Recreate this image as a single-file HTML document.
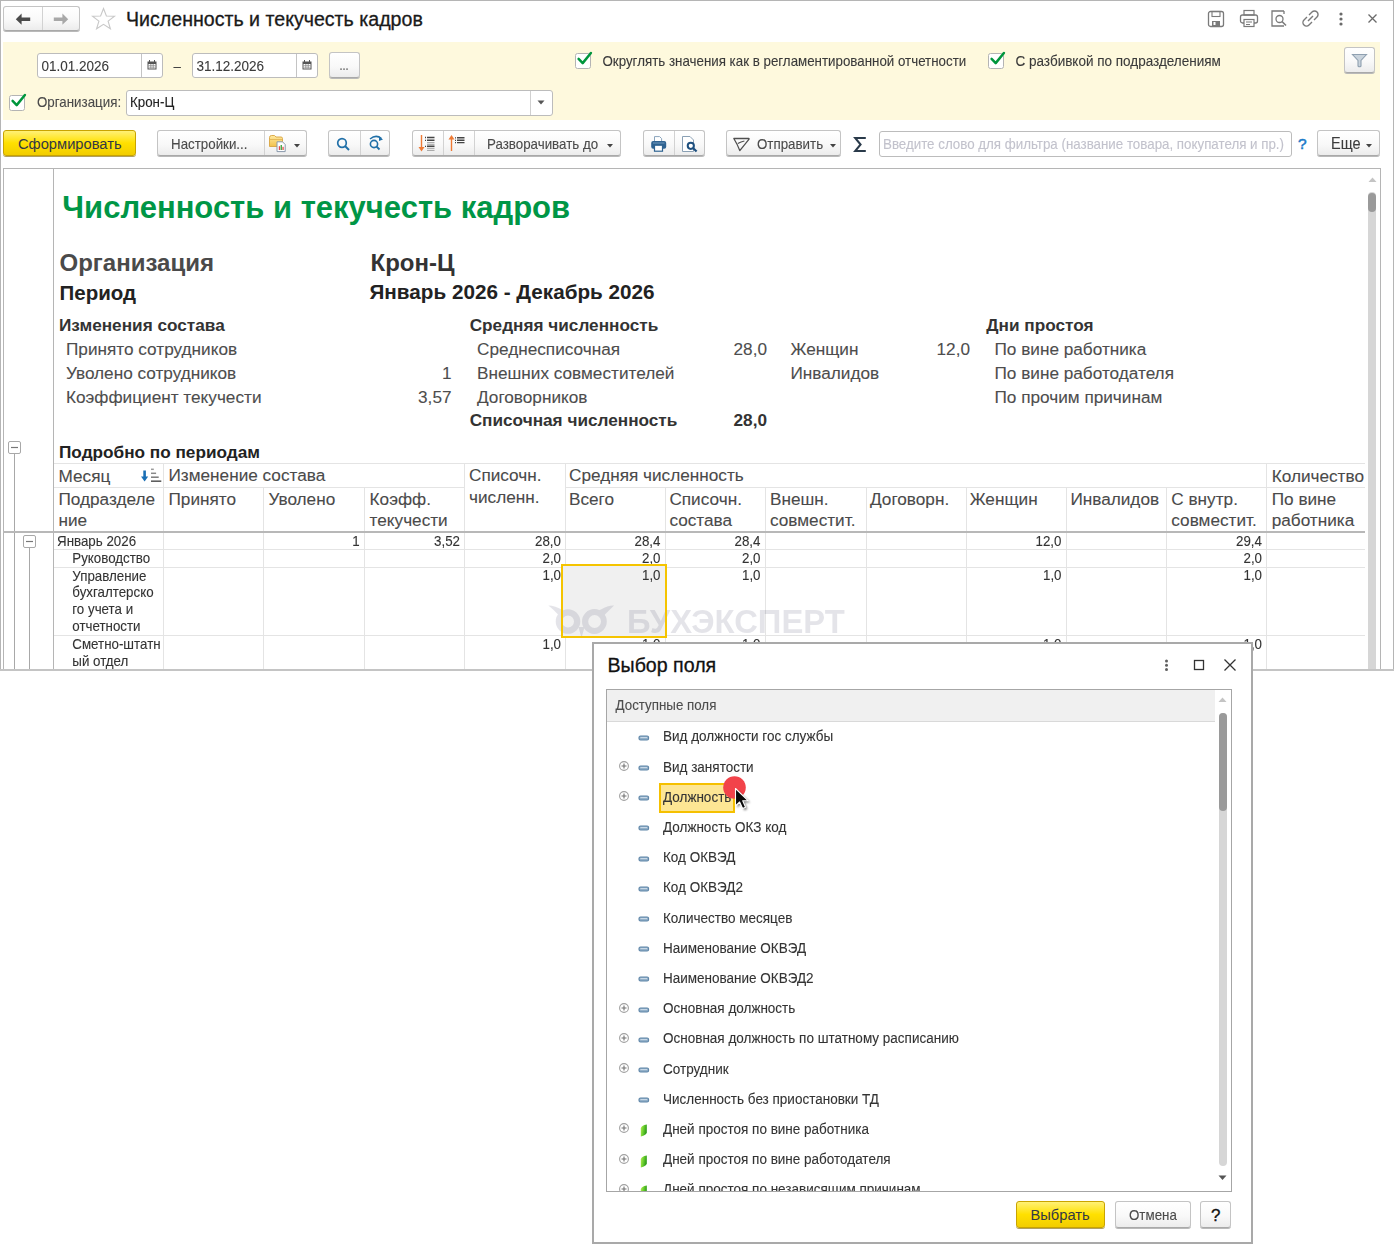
<!DOCTYPE html><html><head><meta charset="utf-8"><style>
html,body{margin:0;padding:0;background:#fff;width:1394px;height:1244px;overflow:hidden;position:relative;font-family:"Liberation Sans",sans-serif}
.t{position:absolute;white-space:nowrap;line-height:1;font-family:"Liberation Sans",sans-serif}
.r{position:absolute}
</style></head><body>
<div class="r" style="left:0px;top:0px;width:1394px;height:671px;box-sizing:border-box;border:1px solid #b5b5b5;background:#fff"></div>
<div class="r" style="left:3px;top:6px;width:77px;height:25px;box-sizing:border-box;border:1px solid #c4c4c4;border-bottom-color:#a9a9a9;border-radius:3px;background:linear-gradient(#ffffff,#f9f9f9 55%,#ececec);box-shadow:0 1px 0 #b9b9b9;"></div>
<div class="r" style="left:42px;top:7px;width:1px;height:23px;background:#d2d2d2"></div>
<svg class="r" style="left:15px;top:13px;" width="17" height="13" viewBox="0 0 17 13"><path d="M0.8 6.2 L6.6 0.6 V4.5 H15.2 V7.9 H6.6 V11.8 Z" fill="#4a4a4a"/></svg>
<svg class="r" style="left:52px;top:13px;" width="17" height="13" viewBox="0 0 17 13"><path d="M16.2 6.2 L10.4 0.6 V4.5 H1.8 V7.9 H10.4 V11.8 Z" fill="#a8a8a8"/></svg>
<svg class="r" style="left:91px;top:7px;" width="26" height="23" viewBox="0 0 26 23"><path d="M12.5 1.5 L15.4 9 L23.5 9.2 L17.1 14.1 L19.4 21.8 L12.5 17.3 L5.6 21.8 L7.9 14.1 L1.5 9.2 L9.6 9 Z" fill="none" stroke="#c8c8c8" stroke-width="1.1"/></svg>
<div class="t" style="left:126.00px;top:10.01px;font-size:19.6px;font-weight:400;color:#1a1a1a;-webkit-text-stroke:0.3px #1a1a1a">Численность и текучесть кадров</div>
<svg class="r" style="left:1207px;top:10px;" width="18" height="18" viewBox="0 0 18 18"><rect x="1.5" y="1.5" width="15" height="15" rx="2" fill="none" stroke="#7a7a7a" stroke-width="1.3"/><rect x="5" y="1.5" width="8" height="5" fill="none" stroke="#7a7a7a" stroke-width="1.1"/><rect x="5" y="11" width="8" height="5.5" fill="#7a7a7a"/><rect x="6.5" y="12" width="2" height="3" fill="#fff"/></svg>
<svg class="r" style="left:1239px;top:9px;" width="20" height="19" viewBox="0 0 20 19"><rect x="5" y="1.5" width="10" height="4.5" fill="none" stroke="#7a7a7a" stroke-width="1.2"/><rect x="1.5" y="6" width="17" height="8" rx="2" fill="none" stroke="#7a7a7a" stroke-width="1.3"/><rect x="5" y="10.5" width="10" height="7" fill="#fff" stroke="#7a7a7a" stroke-width="1.2"/><line x1="7" y1="13" x2="13" y2="13" stroke="#7a7a7a"/><line x1="7" y1="15.5" x2="11" y2="15.5" stroke="#7a7a7a"/></svg>
<svg class="r" style="left:1270px;top:9px;" width="19" height="19" viewBox="0 0 19 19"><path d="M14 2 H2 V17 H14" fill="none" stroke="#7a7a7a" stroke-width="1.3"/><path d="M14 2 V5" stroke="#7a7a7a" stroke-width="1.3"/><circle cx="9.5" cy="10" r="3.5" fill="none" stroke="#7a7a7a" stroke-width="1.3"/><line x1="12" y1="12.5" x2="16" y2="16.5" stroke="#7a7a7a" stroke-width="1.6"/></svg>
<svg class="r" style="left:1301px;top:9px;" width="19" height="19" viewBox="0 0 19 19"><path d="M8 6 L11 3 A3 3 0 0 1 16 8 L13 11" fill="none" stroke="#7a7a7a" stroke-width="1.4"/><path d="M11 13 L8 16 A3 3 0 0 1 3 11 L6 8" fill="none" stroke="#7a7a7a" stroke-width="1.4"/><line x1="7" y1="12" x2="12" y2="7" stroke="#7a7a7a" stroke-width="1.4"/></svg>
<svg class="r" style="left:1337px;top:11px;" width="8" height="16" viewBox="0 0 8 16"><circle cx="4" cy="3" r="1.6" fill="#6a6a6a"/><circle cx="4" cy="8" r="1.6" fill="#6a6a6a"/><circle cx="4" cy="13" r="1.6" fill="#6a6a6a"/></svg>
<svg class="r" style="left:1367px;top:13px;" width="11" height="11" viewBox="0 0 11 11"><path d="M1.5 1.5 L9.5 9.5 M9.5 1.5 L1.5 9.5" stroke="#6a6a6a" stroke-width="1.3"/></svg>
<div class="r" style="left:3px;top:42px;width:1377px;height:78px;background:#fef9dd"></div>
<div class="r" style="left:37px;top:53px;width:126px;height:25px;box-sizing:border-box;border:1px solid #bcbcbc;border-radius:3px;background:#fff"></div>
<div class="r" style="left:141px;top:54px;width:1px;height:23px;background:#c4c4c4"></div>
<div class="t" style="left:41.50px;top:60.07px;font-size:13.5px;font-weight:400;color:#3a3a3a;-webkit-text-stroke:0.1px #3a3a3a;transform:scaleY(1.08);transform-origin:0 84.65%;">01.01.2026</div>
<svg class="r" style="left:147px;top:60px;" width="10" height="10" viewBox="0 0 10 10"><rect x="0.5" y="1.5" width="9" height="8" fill="#555"/><rect x="1.5" y="4" width="7" height="4.5" fill="#fff"/><path d="M2.5 0 V2 M7.5 0 V2" stroke="#555"/><path d="M1.5 5.5 H8.5 M1.5 7.2 H8.5 M3.5 4 V8.5 M5 4 V8.5 M6.5 4 V8.5" stroke="#888" stroke-width="0.6"/></svg>
<div class="t" style="left:173.50px;top:59.92px;font-size:13.33px;font-weight:400;color:#444;-webkit-text-stroke:0.1px #444;transform:scaleY(1.08);transform-origin:0 84.65%;">–</div>
<div class="r" style="left:192px;top:53px;width:126px;height:25px;box-sizing:border-box;border:1px solid #bcbcbc;border-radius:3px;background:#fff"></div>
<div class="r" style="left:296px;top:54px;width:1px;height:23px;background:#c4c4c4"></div>
<div class="t" style="left:196.50px;top:60.07px;font-size:13.5px;font-weight:400;color:#3a3a3a;-webkit-text-stroke:0.1px #3a3a3a;transform:scaleY(1.08);transform-origin:0 84.65%;">31.12.2026</div>
<svg class="r" style="left:302px;top:60px;" width="10" height="10" viewBox="0 0 10 10"><rect x="0.5" y="1.5" width="9" height="8" fill="#555"/><rect x="1.5" y="4" width="7" height="4.5" fill="#fff"/><path d="M2.5 0 V2 M7.5 0 V2" stroke="#555"/><path d="M1.5 5.5 H8.5 M1.5 7.2 H8.5 M3.5 4 V8.5 M5 4 V8.5 M6.5 4 V8.5" stroke="#888" stroke-width="0.6"/></svg>
<div class="r" style="left:329px;top:52px;width:31px;height:26px;box-sizing:border-box;border:1px solid #c4c4c4;border-bottom-color:#a9a9a9;border-radius:3px;background:linear-gradient(#ffffff,#f9f9f9 55%,#ececec);box-shadow:0 1px 0 #b9b9b9;"></div>
<div class="t" style="left:339.50px;top:60.99px;font-size:11px;font-weight:400;color:#555;-webkit-text-stroke:0.1px #555;transform:scaleY(1.08);transform-origin:0 84.65%;">...</div>
<div class="r" style="left:575px;top:53px;width:16px;height:16px;box-sizing:border-box;border:1.3px solid #b4b4b4;border-radius:2.5px;background:#fff"></div>
<svg class="r" style="left:575px;top:50px;" width="20" height="17" viewBox="0 0 20 17"><path d="M3.6 8.9 L7.7 13.1 L15.9 3" fill="none" stroke="#00963c" stroke-width="2.5" stroke-linecap="round" stroke-linejoin="round"/></svg>
<div class="t" style="left:602.50px;top:55.02px;font-size:13.33px;font-weight:400;color:#3a3a3a;-webkit-text-stroke:0.1px #3a3a3a;transform:scaleY(1.08);transform-origin:0 84.65%;">Округлять значения как в регламентированной отчетности</div>
<div class="r" style="left:988px;top:53px;width:16px;height:16px;box-sizing:border-box;border:1.3px solid #b4b4b4;border-radius:2.5px;background:#fff"></div>
<svg class="r" style="left:988px;top:50px;" width="20" height="17" viewBox="0 0 20 17"><path d="M3.6 8.9 L7.7 13.1 L15.9 3" fill="none" stroke="#00963c" stroke-width="2.5" stroke-linecap="round" stroke-linejoin="round"/></svg>
<div class="t" style="left:1015.50px;top:54.87px;font-size:13.5px;font-weight:400;color:#3a3a3a;-webkit-text-stroke:0.1px #3a3a3a;transform:scaleY(1.08);transform-origin:0 84.65%;">С разбивкой по подразделениям</div>
<div class="r" style="left:1344px;top:47px;width:31px;height:26px;box-sizing:border-box;border:1px solid #c4c4c4;border-bottom-color:#a9a9a9;border-radius:3px;background:linear-gradient(#ffffff,#f9f9f9 55%,#ececec);box-shadow:0 1px 0 #b9b9b9;"></div>
<svg class="r" style="left:1351px;top:53px;" width="17" height="15" viewBox="0 0 17 15"><path d="M1.5 1.5 H15.5 L10 7.5 V13 Q8.5 14.5 7 13 V7.5 Z" fill="#c9d3dc" stroke="#8fa0b0" stroke-width="1.1"/></svg>
<div class="r" style="left:9px;top:95px;width:16px;height:16px;box-sizing:border-box;border:1.3px solid #b4b4b4;border-radius:2.5px;background:#fff"></div>
<svg class="r" style="left:9px;top:92px;" width="20" height="17" viewBox="0 0 20 17"><path d="M3.6 8.9 L7.7 13.1 L15.9 3" fill="none" stroke="#00963c" stroke-width="2.5" stroke-linecap="round" stroke-linejoin="round"/></svg>
<div class="t" style="left:37.00px;top:96.22px;font-size:13.33px;font-weight:400;color:#4a4a4a;-webkit-text-stroke:0.1px #4a4a4a;transform:scaleY(1.08);transform-origin:0 84.65%;">Организация:</div>
<div class="r" style="left:126px;top:90px;width:427px;height:26px;box-sizing:border-box;border:1px solid #bcbcbc;border-radius:3px;background:#fff"></div>
<div class="r" style="left:530px;top:91px;width:1px;height:24px;background:#d0d0d0"></div>
<svg class="r" style="left:537px;top:100px;" width="8" height="5" viewBox="0 0 8 5"><path d="M0.5 0.5 H7.5 L4 4.5 Z" fill="#555"/></svg>
<div class="t" style="left:130.00px;top:96.22px;font-size:13.33px;font-weight:400;color:#222;-webkit-text-stroke:0.1px #222;transform:scaleY(1.08);transform-origin:0 84.65%;">Крон-Ц</div>
<div class="r" style="left:3px;top:130px;width:133px;height:26px;box-sizing:border-box;border:1px solid #c9a400;border-radius:3px;background:linear-gradient(#fff176,#ffe000 50%,#f2cd00);box-shadow:0 1px 0 #b0a060"></div>
<div class="t" style="left:18.00px;top:137.06px;font-size:14.7px;font-weight:400;color:#333844;-webkit-text-stroke:0.35px #333844transform:scaleY(1.08);transform-origin:0 84.65%;">Сформировать</div>
<div class="r" style="left:157px;top:130px;width:150px;height:26px;box-sizing:border-box;border:1px solid #c4c4c4;border-bottom-color:#a9a9a9;border-radius:3px;background:linear-gradient(#ffffff,#f9f9f9 55%,#ececec);box-shadow:0 1px 0 #b9b9b9;"></div>
<div class="r" style="left:264px;top:131px;width:1px;height:24px;background:#d2d2d2"></div>
<div class="t" style="left:171.00px;top:137.72px;font-size:13.33px;font-weight:400;color:#4a4a4a;-webkit-text-stroke:0.1px #4a4a4a;transform:scaleY(1.08);transform-origin:0 84.65%;">Настройки...</div>
<svg class="r" style="left:268px;top:134px;" width="20" height="19" viewBox="0 0 20 19"><defs><linearGradient id="fg" x1="0" y1="0" x2="0" y2="1"><stop offset="0" stop-color="#ffe9a0"/><stop offset="1" stop-color="#f2c24e"/></linearGradient></defs><path d="M1.5 3.5 Q1.5 1.5 3.5 1.5 H6.5 L8 3 H13 Q14.5 3 14.5 4.5 V12.5 H1.5 Z" fill="url(#fg)" stroke="#d8a440" stroke-width="0.9"/><path d="M1.5 5.5 H14.5" stroke="#e0b050" stroke-width="0.8"/><path d="M9 7.8 H14.5 L17.2 10.5 V17.6 H9 Z" fill="#fff" stroke="#8898aa" stroke-width="1"/><rect x="10.8" y="12.2" width="1.3" height="3.8" fill="#e24a4a"/><rect x="12.6" y="11" width="1.3" height="5" fill="#3aa03a"/><rect x="14.4" y="12.8" width="1.3" height="3.2" fill="#e24a4a"/></svg>
<svg class="r" style="left:294px;top:144px;" width="7" height="4" viewBox="0 0 7 4"><path d="M0 0 H6 L3 3.5 Z" fill="#444"/></svg>
<div class="r" style="left:328px;top:130px;width:62px;height:26px;box-sizing:border-box;border:1px solid #c4c4c4;border-bottom-color:#a9a9a9;border-radius:3px;background:linear-gradient(#ffffff,#f9f9f9 55%,#ececec);box-shadow:0 1px 0 #b9b9b9;"></div>
<div class="r" style="left:360px;top:131px;width:1px;height:24px;background:#d2d2d2"></div>
<svg class="r" style="left:336px;top:137px;" width="15" height="14" viewBox="0 0 15 14"><circle cx="6" cy="6" r="4.3" fill="none" stroke="#2170a8" stroke-width="1.7"/><line x1="9" y1="9" x2="13" y2="13" stroke="#2170a8" stroke-width="2"/></svg>
<svg class="r" style="left:368px;top:135px;" width="16" height="16" viewBox="0 0 16 16"><path d="M2 4 Q8 -1 13.5 3.5" fill="none" stroke="#2170a8" stroke-width="1.5"/><path d="M11 1.5 L15 4.5 L11 6 Z" fill="#2170a8"/><circle cx="6" cy="9" r="3.6" fill="none" stroke="#2170a8" stroke-width="1.6"/><line x1="8.5" y1="11.5" x2="11.5" y2="14.5" stroke="#2170a8" stroke-width="1.8"/></svg>
<div class="r" style="left:412px;top:130px;width:209px;height:26px;box-sizing:border-box;border:1px solid #c4c4c4;border-bottom-color:#a9a9a9;border-radius:3px;background:linear-gradient(#ffffff,#f9f9f9 55%,#ececec);box-shadow:0 1px 0 #b9b9b9;"></div>
<div class="r" style="left:443px;top:131px;width:1px;height:24px;background:#d2d2d2"></div>
<div class="r" style="left:474px;top:131px;width:1px;height:24px;background:#d2d2d2"></div>
<svg class="r" style="left:417px;top:134px;" width="20" height="19" viewBox="0 0 20 19"><path d="M4.5 1 V15" stroke="#ee7a35" stroke-width="1.4"/><path d="M1.5 13 L4.5 17.5 L7.5 13 Z" fill="#ee7a35"/><path d="M8 3.5 H9 M8 6.3 H9 M8 12.3 H9" stroke="#444" stroke-width="1.3"/><path d="M10 3.5 H17.5 M10 6.3 H17.5 M10 12.3 H17.5" stroke="#444" stroke-width="1.4"/><path d="M10 8.6 H17.5 M10 10.3 H17.5 M10 14.3 H17.5 M10 16.4 H17.5" stroke="#999" stroke-width="0.9"/></svg>
<svg class="r" style="left:447px;top:134px;" width="20" height="19" viewBox="0 0 20 19"><path d="M4.5 3 V17" stroke="#ee7a35" stroke-width="1.4"/><path d="M1.5 5.5 L4.5 1 L7.5 5.5 Z" fill="#ee7a35"/><path d="M8 3.8 H9 M8 6.3 H9 M8 8.6 H9" stroke="#444" stroke-width="1.3"/><path d="M10 3.8 H17.5 M10 6.3 H17.5 M10 8.6 H17.5" stroke="#444" stroke-width="1.4"/></svg>
<div class="t" style="left:487.00px;top:137.72px;font-size:13.33px;font-weight:400;color:#4a4a4a;-webkit-text-stroke:0.1px #4a4a4a;transform:scaleY(1.08);transform-origin:0 84.65%;">Разворачивать до</div>
<svg class="r" style="left:607px;top:144px;" width="7" height="4" viewBox="0 0 7 4"><path d="M0 0 H6 L3 3.5 Z" fill="#444"/></svg>
<div class="r" style="left:643px;top:130px;width:62px;height:26px;box-sizing:border-box;border:1px solid #c4c4c4;border-bottom-color:#a9a9a9;border-radius:3px;background:linear-gradient(#ffffff,#f9f9f9 55%,#ececec);box-shadow:0 1px 0 #b9b9b9;"></div>
<div class="r" style="left:674px;top:131px;width:1px;height:24px;background:#d2d2d2"></div>
<svg class="r" style="left:650px;top:135px;" width="18" height="18" viewBox="0 0 18 18"><path d="M4.5 6 V1.6 H9.6 L11.6 3.6 V6" fill="#fff" stroke="#8aa4bc" stroke-width="1"/><rect x="1.2" y="6" width="15" height="7.8" rx="2" fill="#2f6391"/><line x1="3" y1="8" x2="14.5" y2="8" stroke="#7aa2c4" stroke-width="0.9"/><rect x="4.5" y="10.2" width="8" height="6" fill="#fff" stroke="#2f6391" stroke-width="1.2"/></svg>
<svg class="r" style="left:681px;top:135px;" width="18" height="18" viewBox="0 0 18 18"><path d="M1.5 1.5 H9 L12.5 5 V16.5 H1.5 Z" fill="#fff" stroke="#8aa0b4" stroke-width="1"/><circle cx="9.8" cy="10.8" r="3.1" fill="none" stroke="#1d4f7e" stroke-width="2"/><line x1="12" y1="13" x2="15.6" y2="16.5" stroke="#1d4f7e" stroke-width="2.2"/></svg>
<div class="r" style="left:726px;top:130px;width:115px;height:26px;box-sizing:border-box;border:1px solid #c4c4c4;border-bottom-color:#a9a9a9;border-radius:3px;background:linear-gradient(#ffffff,#f9f9f9 55%,#ececec);box-shadow:0 1px 0 #b9b9b9;"></div>
<svg class="r" style="left:732px;top:136px;" width="19" height="16" viewBox="0 0 19 16"><path d="M1.8 2.5 H16.6 Q17.4 2.6 16.9 3.4 L7.8 14.6 Q5.6 8.6 1.8 2.5 Z" fill="none" stroke="#505050" stroke-width="1.3" stroke-linejoin="round"/><path d="M5.8 7.6 Q9 5.6 12.4 5" fill="none" stroke="#505050" stroke-width="1.2"/></svg>
<div class="t" style="left:757.00px;top:137.72px;font-size:13.33px;font-weight:400;color:#4a4a4a;-webkit-text-stroke:0.1px #4a4a4a;transform:scaleY(1.08);transform-origin:0 84.65%;">Отправить</div>
<svg class="r" style="left:830px;top:144px;" width="7" height="4" viewBox="0 0 7 4"><path d="M0 0 H6 L3 3.5 Z" fill="#444"/></svg>
<svg class="r" style="left:853px;top:136px;" width="14" height="17" viewBox="0 0 14 17"><path d="M12.8 2 H2.2 L7.6 8.5 L2.2 15 H12.8" fill="none" stroke="#2a3a4a" stroke-width="2" stroke-linejoin="miter"/></svg>
<div class="r" style="left:879px;top:131px;width:413px;height:26px;box-sizing:border-box;border:1px solid #bcbcbc;border-radius:3px;background:#fff"></div>
<div class="t" style="left:883.00px;top:137.72px;font-size:13.33px;font-weight:400;color:#c2c2cc;-webkit-text-stroke:0.1px #c2c2cc;transform:scaleY(1.08);transform-origin:0 84.65%;">Введите слово для фильтра (название товара, покупателя и пр.)</div>
<div class="t" style="left:1298.00px;top:136.38px;font-size:15.5px;font-weight:400;color:#1a7ac8;-webkit-text-stroke:0.5px #1a7ac8">?</div>
<div class="r" style="left:1317px;top:130px;width:63px;height:26px;box-sizing:border-box;border:1px solid #c4c4c4;border-bottom-color:#a9a9a9;border-radius:3px;background:linear-gradient(#ffffff,#f9f9f9 55%,#ececec);box-shadow:0 1px 0 #b9b9b9;"></div>
<div class="t" style="left:1331.00px;top:136.73px;font-size:14.5px;font-weight:400;color:#3c3c3c;-webkit-text-stroke:0.1px #3c3c3c;transform:scaleY(1.08);transform-origin:0 84.65%;">Еще</div>
<svg class="r" style="left:1366px;top:144px;" width="7" height="4" viewBox="0 0 7 4"><path d="M0 0 H6 L3 3.5 Z" fill="#444"/></svg>
<div class="r" style="left:3px;top:168px;width:1378px;height:503px;box-sizing:border-box;border:1px solid #b5b5b5;border-bottom:none;background:#fff"></div>
<div class="r" style="left:53px;top:169px;width:1px;height:502px;background:#b5b5b5"></div>
<svg class="r" style="left:1368px;top:177px;" width="9" height="6" viewBox="0 0 9 6"><path d="M0.5 5 H8.5 L4.5 0.5 Z" fill="#c4c4c4"/></svg>
<div class="r" style="left:1368px;top:192px;width:8px;height:479px;background:#d6d6d6;border-radius:4px 4px 0 0"></div>
<div class="r" style="left:1368px;top:193px;width:8px;height:19px;background:#9a9a9a;border-radius:4px"></div>
<div class="t" style="left:62.30px;top:192.26px;font-size:31px;font-weight:700;color:#009646;">Численность и текучесть кадров</div>
<div class="t" style="left:59.50px;top:251.48px;font-size:24px;font-weight:700;color:#4a4a4a;">Организация</div>
<div class="t" style="left:370.50px;top:251.18px;font-size:24px;font-weight:700;color:#333;">Крон-Ц</div>
<div class="t" style="left:59.50px;top:282.65px;font-size:20.5px;font-weight:700;color:#222;">Период</div>
<div class="t" style="left:369.50px;top:282.28px;font-size:20.7px;font-weight:700;color:#222;">Январь 2026 - Декабрь 2026</div>
<div class="t" style="left:59.00px;top:317.44px;font-size:17.2px;font-weight:700;color:#333;">Изменения состава</div>
<div class="t" style="left:66.00px;top:341.44px;font-size:17.2px;font-weight:400;color:#4d4d4d;-webkit-text-stroke:0.1px #4d4d4d;">Принято сотрудников</div>
<div class="t" style="left:66.00px;top:365.44px;font-size:17.2px;font-weight:400;color:#4d4d4d;-webkit-text-stroke:0.1px #4d4d4d;">Уволено сотрудников</div>
<div class="t" style="left:66.00px;top:389.14px;font-size:17.2px;font-weight:400;color:#4d4d4d;-webkit-text-stroke:0.1px #4d4d4d;">Коэффициент текучести</div>
<div class="t" style="right:942.50px;top:365.44px;font-size:17.2px;font-weight:400;color:#4d4d4d;-webkit-text-stroke:0.1px #4d4d4d;">1</div>
<div class="t" style="right:942.50px;top:389.14px;font-size:17.2px;font-weight:400;color:#4d4d4d;-webkit-text-stroke:0.1px #4d4d4d;">3,57</div>
<div class="t" style="left:469.70px;top:317.44px;font-size:17.2px;font-weight:700;color:#333;">Средняя численность</div>
<div class="t" style="left:477.00px;top:341.44px;font-size:17.2px;font-weight:400;color:#4d4d4d;-webkit-text-stroke:0.1px #4d4d4d;">Среднесписочная</div>
<div class="t" style="left:477.00px;top:365.44px;font-size:17.2px;font-weight:400;color:#4d4d4d;-webkit-text-stroke:0.1px #4d4d4d;">Внешних совместителей</div>
<div class="t" style="left:477.00px;top:389.14px;font-size:17.2px;font-weight:400;color:#4d4d4d;-webkit-text-stroke:0.1px #4d4d4d;">Договорников</div>
<div class="t" style="left:469.70px;top:411.94px;font-size:17.2px;font-weight:700;color:#333;">Списочная численность</div>
<div class="t" style="right:627.00px;top:341.44px;font-size:17.2px;font-weight:400;color:#4d4d4d;-webkit-text-stroke:0.1px #4d4d4d;">28,0</div>
<div class="t" style="right:627.00px;top:411.94px;font-size:17.2px;font-weight:700;color:#333;">28,0</div>
<div class="t" style="left:790.50px;top:341.44px;font-size:17.2px;font-weight:400;color:#4d4d4d;-webkit-text-stroke:0.1px #4d4d4d;">Женщин</div>
<div class="t" style="left:790.50px;top:365.44px;font-size:17.2px;font-weight:400;color:#4d4d4d;-webkit-text-stroke:0.1px #4d4d4d;">Инвалидов</div>
<div class="t" style="right:424.00px;top:341.44px;font-size:17.2px;font-weight:400;color:#4d4d4d;-webkit-text-stroke:0.1px #4d4d4d;">12,0</div>
<div class="t" style="left:986.30px;top:317.44px;font-size:17.2px;font-weight:700;color:#333;">Дни простоя</div>
<div class="t" style="left:994.50px;top:341.44px;font-size:17.2px;font-weight:400;color:#4d4d4d;-webkit-text-stroke:0.1px #4d4d4d;">По вине работника</div>
<div class="t" style="left:994.50px;top:365.44px;font-size:17.2px;font-weight:400;color:#4d4d4d;-webkit-text-stroke:0.1px #4d4d4d;">По вине работодателя</div>
<div class="t" style="left:994.50px;top:389.14px;font-size:17.2px;font-weight:400;color:#4d4d4d;-webkit-text-stroke:0.1px #4d4d4d;">По прочим причинам</div>
<svg class="r" style="left:8px;top:441px;" width="14" height="14" viewBox="0 0 14 14"><rect x="0.5" y="0.5" width="12" height="12" rx="1.5" fill="#fff" stroke="#a8a8a8"/><line x1="3" y1="6.5" x2="10" y2="6.5" stroke="#777" stroke-width="1.2"/></svg>
<div class="r" style="left:14px;top:454px;width:1px;height:217px;background:#a8a8a8"></div>
<svg class="r" style="left:23px;top:535px;" width="14" height="14" viewBox="0 0 14 14"><rect x="0.5" y="0.5" width="12" height="12" rx="1.5" fill="#fff" stroke="#a8a8a8"/><line x1="3" y1="6.5" x2="10" y2="6.5" stroke="#777" stroke-width="1.2"/></svg>
<div class="r" style="left:29px;top:548px;width:1px;height:123px;background:#a8a8a8"></div>
<div class="t" style="left:59.00px;top:443.64px;font-size:17.2px;font-weight:700;color:#222;">Подробно по периодам</div>
<div class="r" style="left:54px;top:463px;width:1311px;height:1px;background:#e4e4e4"></div>
<div class="r" style="left:54px;top:487px;width:410px;height:1px;background:#e4e4e4"></div>
<div class="r" style="left:565px;top:487px;width:800px;height:1px;background:#e4e4e4"></div>
<div class="r" style="left:3px;top:531px;width:1362px;height:2px;background:#b8b8b8"></div>
<div class="r" style="left:163px;top:464px;width:1px;height:67px;background:#e4e4e4"></div>
<div class="r" style="left:464px;top:464px;width:1px;height:67px;background:#e4e4e4"></div>
<div class="r" style="left:565px;top:464px;width:1px;height:67px;background:#e4e4e4"></div>
<div class="r" style="left:1266px;top:464px;width:1px;height:67px;background:#e4e4e4"></div>
<div class="r" style="left:263px;top:488px;width:1px;height:43px;background:#e4e4e4"></div>
<div class="r" style="left:364px;top:488px;width:1px;height:43px;background:#e4e4e4"></div>
<div class="r" style="left:665px;top:488px;width:1px;height:43px;background:#e4e4e4"></div>
<div class="r" style="left:765px;top:488px;width:1px;height:43px;background:#e4e4e4"></div>
<div class="r" style="left:866px;top:488px;width:1px;height:43px;background:#e4e4e4"></div>
<div class="r" style="left:966px;top:488px;width:1px;height:43px;background:#e4e4e4"></div>
<div class="r" style="left:1066px;top:488px;width:1px;height:43px;background:#e4e4e4"></div>
<div class="r" style="left:1166px;top:488px;width:1px;height:43px;background:#e4e4e4"></div>
<div class="r" style="left:54px;top:549px;width:1311px;height:1px;background:#e4e4e4"></div>
<div class="r" style="left:54px;top:567px;width:1311px;height:1px;background:#e4e4e4"></div>
<div class="r" style="left:54px;top:635px;width:1311px;height:1px;background:#e4e4e4"></div>
<div class="r" style="left:163px;top:533px;width:1px;height:138px;background:#e4e4e4"></div>
<div class="r" style="left:263px;top:533px;width:1px;height:138px;background:#e4e4e4"></div>
<div class="r" style="left:364px;top:533px;width:1px;height:138px;background:#e4e4e4"></div>
<div class="r" style="left:464px;top:533px;width:1px;height:138px;background:#e4e4e4"></div>
<div class="r" style="left:565px;top:533px;width:1px;height:138px;background:#e4e4e4"></div>
<div class="r" style="left:665px;top:533px;width:1px;height:138px;background:#e4e4e4"></div>
<div class="r" style="left:765px;top:533px;width:1px;height:138px;background:#e4e4e4"></div>
<div class="r" style="left:866px;top:533px;width:1px;height:138px;background:#e4e4e4"></div>
<div class="r" style="left:966px;top:533px;width:1px;height:138px;background:#e4e4e4"></div>
<div class="r" style="left:1066px;top:533px;width:1px;height:138px;background:#e4e4e4"></div>
<div class="r" style="left:1166px;top:533px;width:1px;height:138px;background:#e4e4e4"></div>
<div class="r" style="left:1266px;top:533px;width:1px;height:138px;background:#e4e4e4"></div>
<div class="t" style="left:58.50px;top:467.74px;font-size:17.2px;font-weight:400;color:#4a4a4a;-webkit-text-stroke:0.1px #4a4a4a;">Месяц</div>
<svg class="r" style="left:140px;top:467px;" width="23" height="17" viewBox="0 0 23 17"><path d="M4.6 3.5 V10.5" stroke="#1a6fb5" stroke-width="2.6"/><path d="M1 9.6 L4.6 14.6 L8.2 9.6 Z" fill="#1a6fb5"/><path d="M11 2.3 H13.8" stroke="#9a9a9a" stroke-width="1.5"/><path d="M11 6.3 H16.1" stroke="#8a8a8a" stroke-width="1.5"/><path d="M11 10.2 H18.7" stroke="#7a7a7a" stroke-width="1.5"/><path d="M11 14.2 H21.3" stroke="#5e5e5e" stroke-width="1.6"/></svg>
<div class="t" style="left:58.50px;top:491.44px;font-size:17.2px;font-weight:400;color:#4a4a4a;-webkit-text-stroke:0.1px #4a4a4a;">Подразделе</div>
<div class="t" style="left:58.50px;top:512.04px;font-size:17.2px;font-weight:400;color:#4a4a4a;-webkit-text-stroke:0.1px #4a4a4a;">ние</div>
<div class="t" style="left:168.50px;top:467.44px;font-size:17.2px;font-weight:400;color:#4a4a4a;-webkit-text-stroke:0.1px #4a4a4a;">Изменение состава</div>
<div class="t" style="left:168.50px;top:491.44px;font-size:17.2px;font-weight:400;color:#4a4a4a;-webkit-text-stroke:0.1px #4a4a4a;">Принято</div>
<div class="t" style="left:268.50px;top:491.44px;font-size:17.2px;font-weight:400;color:#4a4a4a;-webkit-text-stroke:0.1px #4a4a4a;">Уволено</div>
<div class="t" style="left:369.60px;top:491.44px;font-size:17.2px;font-weight:400;color:#4a4a4a;-webkit-text-stroke:0.1px #4a4a4a;">Коэфф.</div>
<div class="t" style="left:369.60px;top:512.44px;font-size:17.2px;font-weight:400;color:#4a4a4a;-webkit-text-stroke:0.1px #4a4a4a;">текучести</div>
<div class="t" style="left:469.00px;top:467.44px;font-size:17.2px;font-weight:400;color:#4a4a4a;-webkit-text-stroke:0.1px #4a4a4a;">Списочн.</div>
<div class="t" style="left:469.00px;top:489.24px;font-size:17.2px;font-weight:400;color:#4a4a4a;-webkit-text-stroke:0.1px #4a4a4a;">численн.</div>
<div class="t" style="left:569.00px;top:467.44px;font-size:17.2px;font-weight:400;color:#4a4a4a;-webkit-text-stroke:0.1px #4a4a4a;">Средняя численность</div>
<div class="t" style="left:569.00px;top:491.44px;font-size:17.2px;font-weight:400;color:#4a4a4a;-webkit-text-stroke:0.1px #4a4a4a;">Всего</div>
<div class="t" style="left:669.40px;top:491.44px;font-size:17.2px;font-weight:400;color:#4a4a4a;-webkit-text-stroke:0.1px #4a4a4a;">Списочн.</div>
<div class="t" style="left:669.40px;top:512.44px;font-size:17.2px;font-weight:400;color:#4a4a4a;-webkit-text-stroke:0.1px #4a4a4a;">состава</div>
<div class="t" style="left:770.00px;top:491.44px;font-size:17.2px;font-weight:400;color:#4a4a4a;-webkit-text-stroke:0.1px #4a4a4a;">Внешн.</div>
<div class="t" style="left:770.00px;top:512.44px;font-size:17.2px;font-weight:400;color:#4a4a4a;-webkit-text-stroke:0.1px #4a4a4a;">совместит.</div>
<div class="t" style="left:870.00px;top:491.44px;font-size:17.2px;font-weight:400;color:#4a4a4a;-webkit-text-stroke:0.1px #4a4a4a;">Договорн.</div>
<div class="t" style="left:969.70px;top:491.44px;font-size:17.2px;font-weight:400;color:#4a4a4a;-webkit-text-stroke:0.1px #4a4a4a;">Женщин</div>
<div class="t" style="left:1070.40px;top:491.44px;font-size:17.2px;font-weight:400;color:#4a4a4a;-webkit-text-stroke:0.1px #4a4a4a;">Инвалидов</div>
<div class="t" style="left:1171.30px;top:491.44px;font-size:17.2px;font-weight:400;color:#4a4a4a;-webkit-text-stroke:0.1px #4a4a4a;">С внутр.</div>
<div class="t" style="left:1171.30px;top:512.44px;font-size:17.2px;font-weight:400;color:#4a4a4a;-webkit-text-stroke:0.1px #4a4a4a;">совместит.</div>
<div class="r" style="left:1266px;top:463px;width:99px;height:70px;overflow:hidden">
<div class="t" style="left:5.70px;top:4.84px;font-size:17.2px;font-weight:400;color:#4a4a4a;-webkit-text-stroke:0.1px #4a4a4a;">Количество</div>
<div class="t" style="left:5.70px;top:28.44px;font-size:17.2px;font-weight:400;color:#4a4a4a;-webkit-text-stroke:0.1px #4a4a4a;">По вине</div>
<div class="t" style="left:5.70px;top:49.44px;font-size:17.2px;font-weight:400;color:#4a4a4a;-webkit-text-stroke:0.1px #4a4a4a;">работника</div>
</div>
<div class="r" style="left:561px;top:564px;width:106px;height:74px;background:#f0f0f0"></div>
<div class="t" style="left:57.00px;top:534.52px;font-size:13.33px;font-weight:400;color:#333;-webkit-text-stroke:0.1px #333;transform:scaleY(1.08);transform-origin:0 84.65%;">Январь 2026</div>
<div class="t" style="left:72.30px;top:552.42px;font-size:13.33px;font-weight:400;color:#333;-webkit-text-stroke:0.1px #333;transform:scaleY(1.08);transform-origin:0 84.65%;">Руководство</div>
<div class="t" style="left:72.30px;top:569.72px;font-size:13.33px;font-weight:400;color:#333;-webkit-text-stroke:0.1px #333;transform:scaleY(1.08);transform-origin:0 84.65%;">Управление</div>
<div class="t" style="left:72.30px;top:586.32px;font-size:13.33px;font-weight:400;color:#333;-webkit-text-stroke:0.1px #333;transform:scaleY(1.08);transform-origin:0 84.65%;">бухгалтерско</div>
<div class="t" style="left:72.30px;top:602.92px;font-size:13.33px;font-weight:400;color:#333;-webkit-text-stroke:0.1px #333;transform:scaleY(1.08);transform-origin:0 84.65%;">го учета и</div>
<div class="t" style="left:72.30px;top:619.52px;font-size:13.33px;font-weight:400;color:#333;-webkit-text-stroke:0.1px #333;transform:scaleY(1.08);transform-origin:0 84.65%;">отчетности</div>
<div class="t" style="left:72.30px;top:638.12px;font-size:13.33px;font-weight:400;color:#333;-webkit-text-stroke:0.1px #333;transform:scaleY(1.08);transform-origin:0 84.65%;">Сметно-штатн</div>
<div class="t" style="left:72.30px;top:654.52px;font-size:13.33px;font-weight:400;color:#333;-webkit-text-stroke:0.1px #333;transform:scaleY(1.08);transform-origin:0 84.65%;">ый отдел</div>
<div class="t" style="right:1034.30px;top:534.52px;font-size:13.33px;font-weight:400;color:#333;-webkit-text-stroke:0.1px #333;transform:scaleY(1.08);transform-origin:0 84.65%;">1</div>
<div class="t" style="right:934.00px;top:534.52px;font-size:13.33px;font-weight:400;color:#333;-webkit-text-stroke:0.1px #333;transform:scaleY(1.08);transform-origin:0 84.65%;">3,52</div>
<div class="t" style="right:833.00px;top:534.52px;font-size:13.33px;font-weight:400;color:#333;-webkit-text-stroke:0.1px #333;transform:scaleY(1.08);transform-origin:0 84.65%;">28,0</div>
<div class="t" style="right:733.50px;top:534.52px;font-size:13.33px;font-weight:400;color:#333;-webkit-text-stroke:0.1px #333;transform:scaleY(1.08);transform-origin:0 84.65%;">28,4</div>
<div class="t" style="right:633.50px;top:534.52px;font-size:13.33px;font-weight:400;color:#333;-webkit-text-stroke:0.1px #333;transform:scaleY(1.08);transform-origin:0 84.65%;">28,4</div>
<div class="t" style="right:332.50px;top:534.52px;font-size:13.33px;font-weight:400;color:#333;-webkit-text-stroke:0.1px #333;transform:scaleY(1.08);transform-origin:0 84.65%;">12,0</div>
<div class="t" style="right:132.00px;top:534.52px;font-size:13.33px;font-weight:400;color:#333;-webkit-text-stroke:0.1px #333;transform:scaleY(1.08);transform-origin:0 84.65%;">29,4</div>
<div class="t" style="right:833.00px;top:552.42px;font-size:13.33px;font-weight:400;color:#333;-webkit-text-stroke:0.1px #333;transform:scaleY(1.08);transform-origin:0 84.65%;">2,0</div>
<div class="t" style="right:733.50px;top:552.42px;font-size:13.33px;font-weight:400;color:#333;-webkit-text-stroke:0.1px #333;transform:scaleY(1.08);transform-origin:0 84.65%;">2,0</div>
<div class="t" style="right:633.50px;top:552.42px;font-size:13.33px;font-weight:400;color:#333;-webkit-text-stroke:0.1px #333;transform:scaleY(1.08);transform-origin:0 84.65%;">2,0</div>
<div class="t" style="right:132.00px;top:552.42px;font-size:13.33px;font-weight:400;color:#333;-webkit-text-stroke:0.1px #333;transform:scaleY(1.08);transform-origin:0 84.65%;">2,0</div>
<div class="t" style="right:833.00px;top:569.22px;font-size:13.33px;font-weight:400;color:#333;-webkit-text-stroke:0.1px #333;transform:scaleY(1.08);transform-origin:0 84.65%;">1,0</div>
<div class="t" style="right:733.50px;top:569.22px;font-size:13.33px;font-weight:400;color:#333;-webkit-text-stroke:0.1px #333;transform:scaleY(1.08);transform-origin:0 84.65%;">1,0</div>
<div class="t" style="right:633.50px;top:569.22px;font-size:13.33px;font-weight:400;color:#333;-webkit-text-stroke:0.1px #333;transform:scaleY(1.08);transform-origin:0 84.65%;">1,0</div>
<div class="t" style="right:332.50px;top:569.22px;font-size:13.33px;font-weight:400;color:#333;-webkit-text-stroke:0.1px #333;transform:scaleY(1.08);transform-origin:0 84.65%;">1,0</div>
<div class="t" style="right:132.00px;top:569.22px;font-size:13.33px;font-weight:400;color:#333;-webkit-text-stroke:0.1px #333;transform:scaleY(1.08);transform-origin:0 84.65%;">1,0</div>
<div class="t" style="right:833.00px;top:638.12px;font-size:13.33px;font-weight:400;color:#333;-webkit-text-stroke:0.1px #333;transform:scaleY(1.08);transform-origin:0 84.65%;">1,0</div>
<div class="t" style="right:733.50px;top:638.12px;font-size:13.33px;font-weight:400;color:#333;-webkit-text-stroke:0.1px #333;transform:scaleY(1.08);transform-origin:0 84.65%;">1,0</div>
<div class="t" style="right:633.50px;top:638.12px;font-size:13.33px;font-weight:400;color:#333;-webkit-text-stroke:0.1px #333;transform:scaleY(1.08);transform-origin:0 84.65%;">1,0</div>
<div class="t" style="right:332.50px;top:638.12px;font-size:13.33px;font-weight:400;color:#333;-webkit-text-stroke:0.1px #333;transform:scaleY(1.08);transform-origin:0 84.65%;">1,0</div>
<div class="t" style="right:132.00px;top:638.12px;font-size:13.33px;font-weight:400;color:#333;-webkit-text-stroke:0.1px #333;transform:scaleY(1.08);transform-origin:0 84.65%;">1,0</div>
<div class="r" style="left:546px;top:600px;width:302px;height:40px;opacity:0.12">
<svg class="r" style="left:2px;top:4px;" width="68" height="35" viewBox="0 0 68 35"><path fill="#2a2a50" fill-rule="evenodd" d="M7.7 17.5 a12.3 12.3 0 1 0 24.6 0 a12.3 12.3 0 1 0 -24.6 0 Z M14 17.5 a6 6 0 1 0 12 0 a6 6 0 1 0 -12 0 Z"/><path fill="#2a2a50" fill-rule="evenodd" d="M34 17.5 a12.4 12.4 0 1 0 24.8 0 a12.4 12.4 0 1 0 -24.8 0 Z M40.2 17.5 a6.4 6.4 0 1 0 12.8 0 a6.4 6.4 0 1 0 -12.8 0 Z"/><path fill="#2a2a50" d="M0.4 1.5 Q7 1.5 15 6.5 L10.5 11 Q5.5 5.5 0.4 1.5 Z"/><path fill="#2a2a50" d="M66 1.5 Q60 1.2 53 5.5 Q50 6.8 47 7 L55 12.5 Q58.5 9 66 1.5 Z"/><path fill="#2a2a50" d="M30.5 23 L33.5 34 L36.5 23 Z"/></svg>
<div class="t" style="left:81.00px;top:5.93px;font-size:32.8px;font-weight:700;color:#2a2a50;">БУХЭКСПЕРТ</div>
</div>
<div class="r" style="left:0px;top:669px;width:1394px;height:2px;background:#c4c4c4"></div>
<div class="r" style="left:561px;top:564px;width:106px;height:74px;box-sizing:border-box;border:2px solid #f5c400"></div>
<div class="r" style="left:592px;top:642px;width:661px;height:602px;box-sizing:border-box;border:2px solid #a9a9a9;background:#fff"></div>
<div class="t" style="left:607.50px;top:655.91px;font-size:19.6px;font-weight:400;color:#111;-webkit-text-stroke:0.3px #111">Выбор поля</div>
<svg class="r" style="left:1163px;top:659px;" width="7" height="13" viewBox="0 0 7 13"><circle cx="3.5" cy="2" r="1.5" fill="#606060"/><circle cx="3.5" cy="6.2" r="1.5" fill="#606060"/><circle cx="3.5" cy="10.4" r="1.5" fill="#606060"/></svg>
<svg class="r" style="left:1193px;top:659px;" width="12" height="12" viewBox="0 0 12 12"><rect x="1.5" y="1.5" width="9" height="9" fill="none" stroke="#333" stroke-width="1.3"/></svg>
<svg class="r" style="left:1223px;top:658px;" width="14" height="14" viewBox="0 0 14 14"><path d="M1.5 1.5 L12.5 12.5 M12.5 1.5 L1.5 12.5" stroke="#333" stroke-width="1.3"/></svg>
<div class="r" style="left:606px;top:689px;width:626px;height:503px;box-sizing:border-box;border:1px solid #a6a6a6;background:#fff"></div>
<div class="r" style="left:607px;top:690px;width:608px;height:31px;background:#f0f0f0;border-bottom:1px solid #d9d9d9"></div>
<div class="t" style="left:615.60px;top:698.72px;font-size:13.33px;font-weight:400;color:#4d4d4d;-webkit-text-stroke:0.1px #4d4d4d;transform:scaleY(1.08);transform-origin:0 84.65%;">Доступные поля</div>
<svg class="r" style="left:1218px;top:697px;" width="9" height="6" viewBox="0 0 9 6"><path d="M0.5 5 H8.5 L4.5 0.5 Z" fill="#c4c4c4"/></svg>
<div class="r" style="left:1219px;top:713px;width:8px;height:453px;background:#d6d6d6;border-radius:4px"></div>
<div class="r" style="left:1219px;top:713px;width:8px;height:98px;background:#9a9a9a;border-radius:4px"></div>
<svg class="r" style="left:1218px;top:1175px;" width="9" height="6" viewBox="0 0 9 6"><path d="M0.5 0.5 H8.5 L4.5 5 Z" fill="#555"/></svg>
<div class="r" style="left:607px;top:721px;width:608px;height:470px;overflow:hidden">
<svg class="r" style="left:31px;top:14px;" width="12" height="6" viewBox="0 0 12 6"><rect x="1" y="1" width="9.6" height="4" rx="1.5" fill="#8eacc6" stroke="#5f86a8" stroke-width="1.1"/><line x1="2.4" y1="2.6" x2="9.2" y2="2.6" stroke="#d4e2ee" stroke-width="0.9"/></svg>
<div class="t" style="left:56.00px;top:9.37px;font-size:13.5px;font-weight:400;color:#333;-webkit-text-stroke:0.1px #333;transform:scaleY(1.08);transform-origin:0 84.65%;">Вид должности гос службы</div>
<svg class="r" style="left:12px;top:40px;" width="10" height="10" viewBox="0 0 10 10"><circle cx="5" cy="5" r="4.4" fill="#fff" stroke="#a0a0a0" stroke-width="1.1"/><path d="M2.5 5 H7.5 M5 2.5 V7.5" stroke="#707070" stroke-width="1.1"/></svg>
<svg class="r" style="left:31px;top:44px;" width="12" height="6" viewBox="0 0 12 6"><rect x="1" y="1" width="9.6" height="4" rx="1.5" fill="#8eacc6" stroke="#5f86a8" stroke-width="1.1"/><line x1="2.4" y1="2.6" x2="9.2" y2="2.6" stroke="#d4e2ee" stroke-width="0.9"/></svg>
<div class="t" style="left:56.00px;top:39.57px;font-size:13.5px;font-weight:400;color:#333;-webkit-text-stroke:0.1px #333;transform:scaleY(1.08);transform-origin:0 84.65%;">Вид занятости</div>
<div class="r" style="left:52px;top:62px;width:76px;height:30px;box-sizing:border-box;border:2px solid #f5c000;background:#fde694"></div>
<svg class="r" style="left:12px;top:70px;" width="10" height="10" viewBox="0 0 10 10"><circle cx="5" cy="5" r="4.4" fill="#fff" stroke="#a0a0a0" stroke-width="1.1"/><path d="M2.5 5 H7.5 M5 2.5 V7.5" stroke="#707070" stroke-width="1.1"/></svg>
<svg class="r" style="left:31px;top:74px;" width="12" height="6" viewBox="0 0 12 6"><rect x="1" y="1" width="9.6" height="4" rx="1.5" fill="#8eacc6" stroke="#5f86a8" stroke-width="1.1"/><line x1="2.4" y1="2.6" x2="9.2" y2="2.6" stroke="#d4e2ee" stroke-width="0.9"/></svg>
<div class="t" style="left:56.00px;top:69.77px;font-size:13.5px;font-weight:400;color:#333;-webkit-text-stroke:0.1px #333;transform:scaleY(1.08);transform-origin:0 84.65%;">Должность</div>
<svg class="r" style="left:31px;top:104px;" width="12" height="6" viewBox="0 0 12 6"><rect x="1" y="1" width="9.6" height="4" rx="1.5" fill="#8eacc6" stroke="#5f86a8" stroke-width="1.1"/><line x1="2.4" y1="2.6" x2="9.2" y2="2.6" stroke="#d4e2ee" stroke-width="0.9"/></svg>
<div class="t" style="left:56.00px;top:99.97px;font-size:13.5px;font-weight:400;color:#333;-webkit-text-stroke:0.1px #333;transform:scaleY(1.08);transform-origin:0 84.65%;">Должность ОКЗ код</div>
<svg class="r" style="left:31px;top:135px;" width="12" height="6" viewBox="0 0 12 6"><rect x="1" y="1" width="9.6" height="4" rx="1.5" fill="#8eacc6" stroke="#5f86a8" stroke-width="1.1"/><line x1="2.4" y1="2.6" x2="9.2" y2="2.6" stroke="#d4e2ee" stroke-width="0.9"/></svg>
<div class="t" style="left:56.00px;top:130.17px;font-size:13.5px;font-weight:400;color:#333;-webkit-text-stroke:0.1px #333;transform:scaleY(1.08);transform-origin:0 84.65%;">Код ОКВЭД</div>
<svg class="r" style="left:31px;top:165px;" width="12" height="6" viewBox="0 0 12 6"><rect x="1" y="1" width="9.6" height="4" rx="1.5" fill="#8eacc6" stroke="#5f86a8" stroke-width="1.1"/><line x1="2.4" y1="2.6" x2="9.2" y2="2.6" stroke="#d4e2ee" stroke-width="0.9"/></svg>
<div class="t" style="left:56.00px;top:160.37px;font-size:13.5px;font-weight:400;color:#333;-webkit-text-stroke:0.1px #333;transform:scaleY(1.08);transform-origin:0 84.65%;">Код ОКВЭД2</div>
<svg class="r" style="left:31px;top:195px;" width="12" height="6" viewBox="0 0 12 6"><rect x="1" y="1" width="9.6" height="4" rx="1.5" fill="#8eacc6" stroke="#5f86a8" stroke-width="1.1"/><line x1="2.4" y1="2.6" x2="9.2" y2="2.6" stroke="#d4e2ee" stroke-width="0.9"/></svg>
<div class="t" style="left:56.00px;top:190.57px;font-size:13.5px;font-weight:400;color:#333;-webkit-text-stroke:0.1px #333;transform:scaleY(1.08);transform-origin:0 84.65%;">Количество месяцев</div>
<svg class="r" style="left:31px;top:225px;" width="12" height="6" viewBox="0 0 12 6"><rect x="1" y="1" width="9.6" height="4" rx="1.5" fill="#8eacc6" stroke="#5f86a8" stroke-width="1.1"/><line x1="2.4" y1="2.6" x2="9.2" y2="2.6" stroke="#d4e2ee" stroke-width="0.9"/></svg>
<div class="t" style="left:56.00px;top:220.77px;font-size:13.5px;font-weight:400;color:#333;-webkit-text-stroke:0.1px #333;transform:scaleY(1.08);transform-origin:0 84.65%;">Наименование ОКВЭД</div>
<svg class="r" style="left:31px;top:255px;" width="12" height="6" viewBox="0 0 12 6"><rect x="1" y="1" width="9.6" height="4" rx="1.5" fill="#8eacc6" stroke="#5f86a8" stroke-width="1.1"/><line x1="2.4" y1="2.6" x2="9.2" y2="2.6" stroke="#d4e2ee" stroke-width="0.9"/></svg>
<div class="t" style="left:56.00px;top:250.97px;font-size:13.5px;font-weight:400;color:#333;-webkit-text-stroke:0.1px #333;transform:scaleY(1.08);transform-origin:0 84.65%;">Наименование ОКВЭД2</div>
<svg class="r" style="left:12px;top:282px;" width="10" height="10" viewBox="0 0 10 10"><circle cx="5" cy="5" r="4.4" fill="#fff" stroke="#a0a0a0" stroke-width="1.1"/><path d="M2.5 5 H7.5 M5 2.5 V7.5" stroke="#707070" stroke-width="1.1"/></svg>
<svg class="r" style="left:31px;top:286px;" width="12" height="6" viewBox="0 0 12 6"><rect x="1" y="1" width="9.6" height="4" rx="1.5" fill="#8eacc6" stroke="#5f86a8" stroke-width="1.1"/><line x1="2.4" y1="2.6" x2="9.2" y2="2.6" stroke="#d4e2ee" stroke-width="0.9"/></svg>
<div class="t" style="left:56.00px;top:281.17px;font-size:13.5px;font-weight:400;color:#333;-webkit-text-stroke:0.1px #333;transform:scaleY(1.08);transform-origin:0 84.65%;">Основная должность</div>
<svg class="r" style="left:12px;top:312px;" width="10" height="10" viewBox="0 0 10 10"><circle cx="5" cy="5" r="4.4" fill="#fff" stroke="#a0a0a0" stroke-width="1.1"/><path d="M2.5 5 H7.5 M5 2.5 V7.5" stroke="#707070" stroke-width="1.1"/></svg>
<svg class="r" style="left:31px;top:316px;" width="12" height="6" viewBox="0 0 12 6"><rect x="1" y="1" width="9.6" height="4" rx="1.5" fill="#8eacc6" stroke="#5f86a8" stroke-width="1.1"/><line x1="2.4" y1="2.6" x2="9.2" y2="2.6" stroke="#d4e2ee" stroke-width="0.9"/></svg>
<div class="t" style="left:56.00px;top:311.37px;font-size:13.5px;font-weight:400;color:#333;-webkit-text-stroke:0.1px #333;transform:scaleY(1.08);transform-origin:0 84.65%;">Основная должность по штатному расписанию</div>
<svg class="r" style="left:12px;top:342px;" width="10" height="10" viewBox="0 0 10 10"><circle cx="5" cy="5" r="4.4" fill="#fff" stroke="#a0a0a0" stroke-width="1.1"/><path d="M2.5 5 H7.5 M5 2.5 V7.5" stroke="#707070" stroke-width="1.1"/></svg>
<svg class="r" style="left:31px;top:346px;" width="12" height="6" viewBox="0 0 12 6"><rect x="1" y="1" width="9.6" height="4" rx="1.5" fill="#8eacc6" stroke="#5f86a8" stroke-width="1.1"/><line x1="2.4" y1="2.6" x2="9.2" y2="2.6" stroke="#d4e2ee" stroke-width="0.9"/></svg>
<div class="t" style="left:56.00px;top:341.57px;font-size:13.5px;font-weight:400;color:#333;-webkit-text-stroke:0.1px #333;transform:scaleY(1.08);transform-origin:0 84.65%;">Сотрудник</div>
<svg class="r" style="left:31px;top:376px;" width="12" height="6" viewBox="0 0 12 6"><rect x="1" y="1" width="9.6" height="4" rx="1.5" fill="#8eacc6" stroke="#5f86a8" stroke-width="1.1"/><line x1="2.4" y1="2.6" x2="9.2" y2="2.6" stroke="#d4e2ee" stroke-width="0.9"/></svg>
<div class="t" style="left:56.00px;top:371.77px;font-size:13.5px;font-weight:400;color:#333;-webkit-text-stroke:0.1px #333;transform:scaleY(1.08);transform-origin:0 84.65%;">Численность без приостановки ТД</div>
<svg class="r" style="left:12px;top:402px;" width="10" height="10" viewBox="0 0 10 10"><circle cx="5" cy="5" r="4.4" fill="#fff" stroke="#a0a0a0" stroke-width="1.1"/><path d="M2.5 5 H7.5 M5 2.5 V7.5" stroke="#707070" stroke-width="1.1"/></svg>
<svg class="r" style="left:33px;top:403px;" width="8" height="13" viewBox="0 0 8 13"><defs><linearGradient id="lg13" x1="0" y1="0" x2="1" y2="0.3"><stop offset="0" stop-color="#b8ee50"/><stop offset="0.5" stop-color="#6cd030"/><stop offset="1" stop-color="#2c9a18"/></linearGradient></defs><path d="M0.8 4.5 Q1.2 1.6 6.8 0.6 V8.6 Q6.4 11.4 0.8 12.4 Z" fill="url(#lg13)"/></svg>
<div class="t" style="left:56.00px;top:401.97px;font-size:13.5px;font-weight:400;color:#333;-webkit-text-stroke:0.1px #333;transform:scaleY(1.08);transform-origin:0 84.65%;">Дней простоя по вине работника</div>
<svg class="r" style="left:12px;top:433px;" width="10" height="10" viewBox="0 0 10 10"><circle cx="5" cy="5" r="4.4" fill="#fff" stroke="#a0a0a0" stroke-width="1.1"/><path d="M2.5 5 H7.5 M5 2.5 V7.5" stroke="#707070" stroke-width="1.1"/></svg>
<svg class="r" style="left:33px;top:434px;" width="8" height="13" viewBox="0 0 8 13"><defs><linearGradient id="lg14" x1="0" y1="0" x2="1" y2="0.3"><stop offset="0" stop-color="#b8ee50"/><stop offset="0.5" stop-color="#6cd030"/><stop offset="1" stop-color="#2c9a18"/></linearGradient></defs><path d="M0.8 4.5 Q1.2 1.6 6.8 0.6 V8.6 Q6.4 11.4 0.8 12.4 Z" fill="url(#lg14)"/></svg>
<div class="t" style="left:56.00px;top:432.17px;font-size:13.5px;font-weight:400;color:#333;-webkit-text-stroke:0.1px #333;transform:scaleY(1.08);transform-origin:0 84.65%;">Дней простоя по вине работодателя</div>
<svg class="r" style="left:12px;top:463px;" width="10" height="10" viewBox="0 0 10 10"><circle cx="5" cy="5" r="4.4" fill="#fff" stroke="#a0a0a0" stroke-width="1.1"/><path d="M2.5 5 H7.5 M5 2.5 V7.5" stroke="#707070" stroke-width="1.1"/></svg>
<svg class="r" style="left:33px;top:464px;" width="8" height="13" viewBox="0 0 8 13"><defs><linearGradient id="lg15" x1="0" y1="0" x2="1" y2="0.3"><stop offset="0" stop-color="#b8ee50"/><stop offset="0.5" stop-color="#6cd030"/><stop offset="1" stop-color="#2c9a18"/></linearGradient></defs><path d="M0.8 4.5 Q1.2 1.6 6.8 0.6 V8.6 Q6.4 11.4 0.8 12.4 Z" fill="url(#lg15)"/></svg>
<div class="t" style="left:56.00px;top:462.37px;font-size:13.5px;font-weight:400;color:#333;-webkit-text-stroke:0.1px #333;transform:scaleY(1.08);transform-origin:0 84.65%;">Дней простоя по независящим причинам</div>
</div>
<svg class="r" style="left:722px;top:775px;" width="26" height="26" viewBox="0 0 26 26"><circle cx="12.5" cy="12.5" r="11.3" fill="#f2434a"/></svg>
<svg class="r" style="left:731px;top:784px;" width="24" height="30" viewBox="0 0 24 30"><defs><filter id="sh" x="-40%" y="-40%" width="180%" height="180%"><feGaussianBlur stdDeviation="1.3"/></filter></defs><path d="M4.5 4.5 V22 L8.6 18 L11.6 24.6 L14.6 23.3 L11.7 16.8 L17.3 16.8 Z" fill="#000" opacity="0.5" filter="url(#sh)" transform="translate(1.8,1.8)"/><path d="M4.5 4.5 V22 L8.6 18 L11.6 24.6 L14.6 23.3 L11.7 16.8 L17.3 16.8 Z" fill="#0a0a0a" stroke="#fff" stroke-width="1.1" stroke-linejoin="round"/></svg>
<div class="r" style="left:1016px;top:1201px;width:89px;height:27px;box-sizing:border-box;border:1px solid #c9a400;border-radius:3px;background:linear-gradient(#fff176,#ffe000 50%,#f2cd00);box-shadow:0 1px 0 #b0a060"></div>
<div class="t" style="left:1030.50px;top:1207.76px;font-size:14.7px;font-weight:400;color:#333844;-webkit-text-stroke:0.35px #333844transform:scaleY(1.08);transform-origin:0 84.65%;">Выбрать</div>
<div class="r" style="left:1115px;top:1201px;width:76px;height:27px;box-sizing:border-box;border:1px solid #c4c4c4;border-bottom-color:#a9a9a9;border-radius:3px;background:linear-gradient(#ffffff,#f9f9f9 55%,#ececec);box-shadow:0 1px 0 #b9b9b9;"></div>
<div class="t" style="left:1129.00px;top:1209.22px;font-size:13.33px;font-weight:400;color:#4a4a4a;-webkit-text-stroke:0.1px #4a4a4a;transform:scaleY(1.08);transform-origin:0 84.65%;">Отмена</div>
<div class="r" style="left:1200px;top:1201px;width:31px;height:27px;box-sizing:border-box;border:1px solid #c4c4c4;border-bottom-color:#a9a9a9;border-radius:3px;background:linear-gradient(#ffffff,#f9f9f9 55%,#ececec);box-shadow:0 1px 0 #b9b9b9;"></div>
<div class="t" style="left:1211.00px;top:1207.11px;font-size:17px;font-weight:400;color:#111;-webkit-text-stroke:0.3px #111">?</div>
</body></html>
